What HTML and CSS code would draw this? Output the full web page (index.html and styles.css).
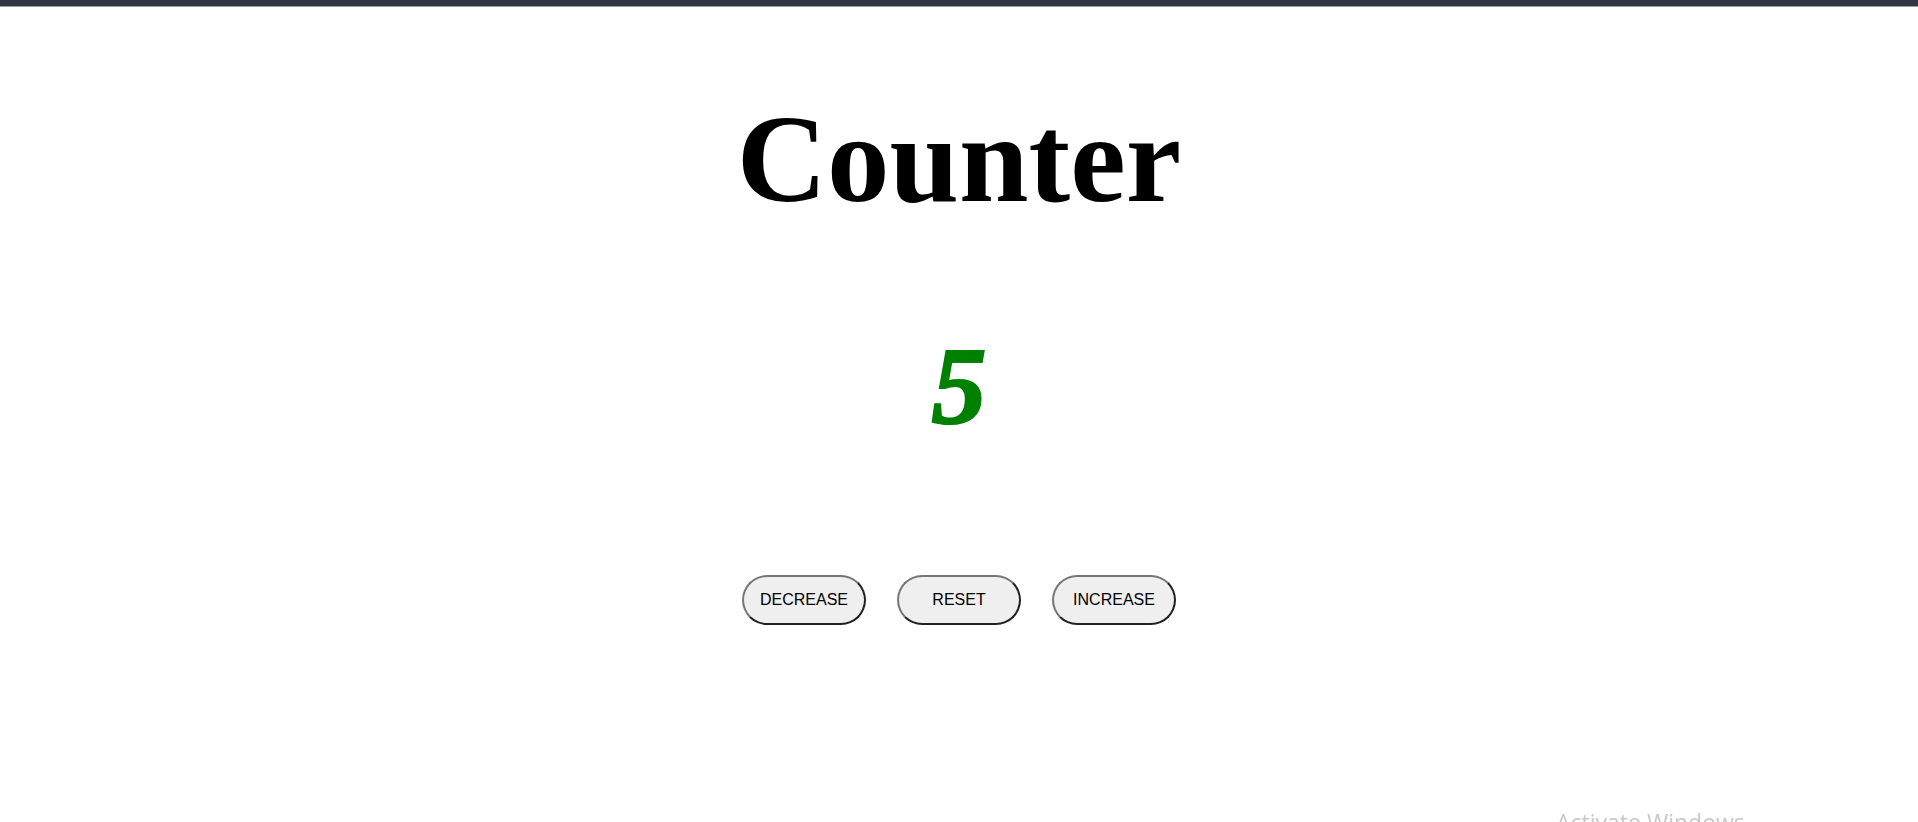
FILE: index.html
```html
<!DOCTYPE html>
<html lang="en">
<head>
<meta charset="utf-8">
<title>Counter</title>
<link rel="stylesheet" href="styles.css">
</head>
<body>
<div class="topbar"></div>
<main class="app">
  <h1 class="title">Counter</h1>
  <div class="value">5</div>
  <div class="controls">
    <button class="btn">DECREASE</button>
    <button class="btn">RESET</button>
    <button class="btn">INCREASE</button>
  </div>
</main>
<div class="watermark">Activate Windows</div>
</body>
</html>
```
FILE: styles.css
```css
html, body {
  margin: 0;
  padding: 0;
  background: #ffffff;
  overflow: hidden;
}
body {
  height: 822px;
  font-family: "Liberation Serif", "Times New Roman", serif;
}
.topbar {
  height: 6px;
  background: #313544;
  border-bottom: 1px solid #9a9ca3;
}
.app {
  display: flex;
  flex-direction: column;
  align-items: center;
}
.title {
  margin: 90px 0 0 0;
  font-size: 125px;
  line-height: 1;
  font-weight: bold;
  color: #000;
}
.value {
  margin-top: 109px;
  font-size: 110px;
  line-height: 1;
  font-weight: bold;
  font-style: italic;
  color: #008000;
  -webkit-text-stroke: 2px #008000;
}
.controls {
  margin-top: 134px;
  display: flex;
  gap: 31px;
}
.btn {
  width: 124px;
  height: 50px;
  box-sizing: border-box;
  border: 2px outset #767676;
  border-radius: 25px;
  background: #efefef;
  font-family: "Liberation Sans", Arial, sans-serif;
  font-size: 16px;
  color: #000;
  padding: 0;
}
.watermark {
  position: fixed;
  left: 1556px;
  top: 806px;
  font-family: "Open Sans", "Noto Sans", sans-serif;
  font-size: 23px;
  color: #c8c8c8;
  white-space: nowrap;
}
```
